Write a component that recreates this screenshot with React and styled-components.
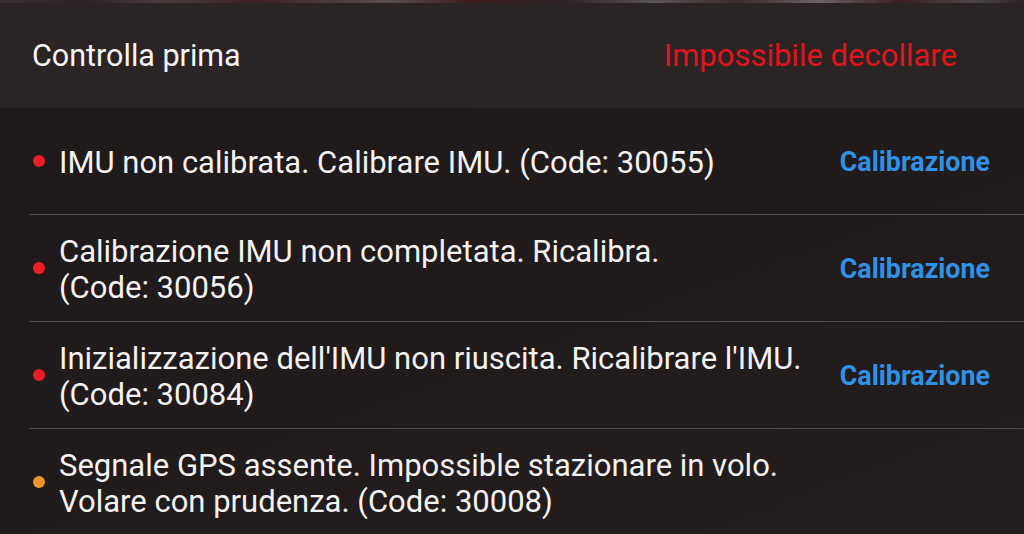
import React from 'react';
import styled, { createGlobalStyle } from 'styled-components';

const GlobalStyle = createGlobalStyle`
  html, body {
    margin: 0;
    padding: 0;
    background: #201a1b;
  }
  body {
    font-family: Roboto, "Liberation Sans", sans-serif;
    -webkit-font-smoothing: antialiased;
  }
`;

const Screen = styled.div`
  width: 1024px;
  height: 534px;
  overflow: hidden;
  background: linear-gradient(160deg, #1e191a 0%, #211b1c 60%, #241e1f 100%);
  color: #f4f2f2;
`;

// sliver of the camera feed peeking above the panel
const FeedStrip = styled.div`
  height: 3px;
  background: linear-gradient(
    90deg,
    #3a3033 0%, #2a2224 8%, #4a3c3e 16%, #3a2022 25%, #5a4f50 38%,
    #3b1b1d 46%, #2d2325 55%, #5b5455 64%, #3a2a2b 72%, #6a6264 80%,
    #3a1e20 88%, #4e4748 95%, #2a2224 100%
  );
`;

const Header = styled.header`
  height: 105px;
  display: flex;
  align-items: center;
  justify-content: space-between;
  padding: 0 67px 0 32px;
  background: #2a2425;
`;

const Title = styled.h1`
  margin: 0;
  font-size: 30.5px;
  font-weight: 400;
  color: #f6f4f4;
`;

const Status = styled.span`
  font-size: 31px;
  font-weight: 400;
  color: #e0141c;
`;

const List = styled.ul`
  list-style: none;
  margin: 0 0 0 29px;
  padding: 0;
`;

const Row = styled.li`
  height: 107px;
  display: flex;
  align-items: center;
  padding: 0 34px 0 4px;
  border-top: 1px solid #4f4a4b;
  box-sizing: border-box;

  &:first-child {
    border-top: none;
    height: 106px;
  }
`;

const Dot = styled.span`
  flex: none;
  width: 12px;
  height: 12px;
  border-radius: 50%;
  background: ${(p) => (p.$level === 'warn' ? '#f0922b' : '#ee1c26')};
  margin-right: 14px;
`;

const Message = styled.div`
  flex: 1;
  padding-top: 3px;
  font-size: 31px;
  line-height: 36px;
  color: #f4f2f2;
`;

const Line = styled.div`
  white-space: nowrap;
`;

const Action = styled.a`
  flex: none;
  padding-top: 1px;
  font-size: 26.8px;
  font-weight: 700;
  color: #2f92e6;
  text-decoration: none;
  cursor: pointer;
`;

const checks = [
  {
    level: 'error',
    lines: ['IMU non calibrata. Calibrare IMU. (Code: 30055)'],
    action: 'Calibrazione',
  },
  {
    level: 'error',
    lines: ['Calibrazione IMU non completata. Ricalibra.', '(Code: 30056)'],
    action: 'Calibrazione',
  },
  {
    level: 'error',
    lines: [
      "Inizializzazione dell'IMU non riuscita. Ricalibrare l'IMU.",
      '(Code: 30084)',
    ],
    action: 'Calibrazione',
  },
  {
    level: 'warn',
    lines: [
      'Segnale GPS assente. Impossible stazionare in volo.',
      'Volare con prudenza. (Code: 30008)',
    ],
  },
];

export default function App() {
  return (
    <>
      <GlobalStyle />
      <Screen>
        <FeedStrip />
        <Header>
          <Title>Controlla prima</Title>
          <Status>Impossibile decollare</Status>
        </Header>
        <List>
          {checks.map((c, i) => (
            <Row key={i}>
              <Dot $level={c.level} />
              <Message>
                {c.lines.map((l) => (
                  <Line key={l}>{l}</Line>
                ))}
              </Message>
              {c.action && <Action>{c.action}</Action>}
            </Row>
          ))}
        </List>
      </Screen>
    </>
  );
}
